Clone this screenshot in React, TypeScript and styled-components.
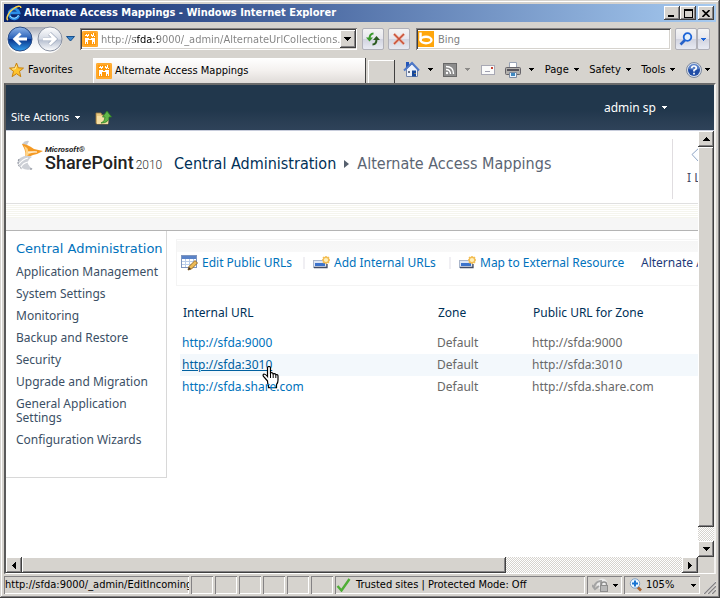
import React from "react";
import styled, { createGlobalStyle, css } from "styled-components";

const face = "#d6d3ce";
const ui = `"DejaVu Sans Condensed", "DejaVu Sans", sans-serif`;
const body = `"Noto Sans", "Open Sans", sans-serif`;

const Global = createGlobalStyle`
  * { box-sizing: border-box; }
  html, body, #root { height: 100%; }
  body { margin: 0; overflow: hidden; }
  button, input { font: inherit; color: inherit; margin: 0; padding: 0; border: 0; background: none; border-radius: 0; outline: 0; }
  svg { display: block; flex: none; }
  a { text-decoration: none; }
`;

const raised = css`
  background: ${face};
  box-shadow: inset -1px -1px #404040, inset 1px 1px #fff, inset -2px -2px #848284;
`;

const Window = styled.div`
  display: flex;
  flex-direction: column;
  height: 100vh;
  padding: 4px;
  overflow: hidden;
  background: ${face};
  color: #000;
  font: 11px/14px ${ui};
  box-shadow: inset -1px -1px #404040, inset 1px 1px ${face}, inset -2px -2px #848284, inset 2px 2px #fff;
`;

const TitleBar = styled.header`
  display: flex;
  align-items: center;
  flex: none;
  height: 18px;
  padding: 0 2px;
  gap: 2px;
  background: linear-gradient(to right, #0a246a, #a6caf0);
  color: #fff;
`;
const Title = styled.h1`
  flex: 1;
  margin: 0;
  font: bold 11px/18px ${ui};
  white-space: nowrap;
  overflow: hidden;
`;
const CaptionGroup = styled.div`display: flex;`;
const CaptionButton = styled.button`
  display: grid;
  place-items: center;
  width: 16px;
  height: 14px;
  ${raised}
`;

const NavRow = styled.div`
  display: flex;
  align-items: center;
  flex: none;
  height: 34px;
  padding: 0 6px 0 3px;
`;
const Capsule = styled.div`
  display: flex;
  align-items: center;
  justify-content: space-between;
  width: 55px;
  height: 25px;
  border-radius: 13px;
  background: linear-gradient(#a8abb5, #eceef2 45%, #fff);
  box-shadow: 0 1px #fff;
`;
const IconButton = styled.button<{ $w?: number }>`
  display: flex;
  align-items: center;
  justify-content: center;
  flex: none;
  width: ${(p) => p.$w ?? 24}px;
  height: 24px;
`;
const Field = styled.div<{ $grow: number; $left: number }>`
  display: flex;
  align-items: center;
  flex: ${(p) => p.$grow} 1 0;
  min-width: 0;
  height: 22px;
  margin-left: ${(p) => p.$left}px;
  padding: 2px 1px 2px 2px;
  background: #fff;
  box-shadow: inset 1px 1px #848284, inset -1px -1px #fff, inset 2px 2px #404040, inset -2px -2px ${face};
`;
const AddressInput = styled.input`
  flex: 1;
  min-width: 0;
  margin-left: 3px;
  height: 18px;
  color: transparent;
  background: linear-gradient(to right, #808080 34px, #000 34px, #000 57px, #808080 57px);
  background-clip: text;
  -webkit-background-clip: text;
`;
const SearchInput = styled.input`
  flex: 1;
  min-width: 0;
  margin-left: 4px;
  height: 18px;
  &::placeholder { color: #808080; opacity: 1; }
`;
const DropButton = styled.button`
  display: grid;
  place-items: center;
  width: 16px;
  height: 18px;
  ${raised}
`;
const SoftButton = styled.button<{ $left?: number; $w: number }>`
  display: grid;
  place-items: center;
  flex: none;
  width: ${(p) => p.$w}px;
  height: 22px;
  margin-left: ${(p) => p.$left ?? 0}px;
  border: 1px solid #b0b0b8;
  border-radius: 2px;
  background: linear-gradient(#f4f4f4, #e6e6ee 50%, #d2d4e0 52%, #e8eaf2);
`;

const CommandRow = styled.div`
  display: flex;
  align-items: center;
  flex: none;
  height: 27px;
  padding: 0 6px 0 5px;
`;
const Favorites = styled.button`
  display: flex;
  align-items: center;
  gap: 4px;
  width: 84px;
  height: 24px;
`;
const TabButton = styled.button`
  display: flex;
  align-items: center;
  align-self: flex-end;
  flex: 1 1 0;
  min-width: 0;
  gap: 3px;
  height: 25px;
  padding-left: 3px;
  border-right: 1px solid #404040;
  background: linear-gradient(#fff, #f4f1ef 50%, #dfdbd8);
  box-shadow: inset 1px 1px #fff;
  white-space: nowrap;
`;
const NewTab = styled.button`
  align-self: flex-end;
  width: 27px;
  height: 23px;
  margin: 0 8px 0 2px;
  border-right: 1px solid #404040;
  box-shadow: inset 1px 1px #fff;
`;
const Commands = styled.nav`
  display: flex;
  align-items: center;
  justify-content: space-between;
  width: 307px;
`;
const Command = styled.button<{ $gap?: number }>`
  display: flex;
  align-items: center;
  gap: ${(p) => p.$gap ?? 5}px;
  height: 22px;
`;

const Frame = styled.div`
  display: flex;
  flex-direction: column;
  flex: 1;
  min-height: 0;
  border: solid;
  border-width: 2px 2px 1px 2px;
  border-color: #6a6a6a #f4f2f0 #fff #5a5a5a;
  background: #fff;
`;
const Ribbon = styled.div`
  display: flex;
  flex: none;
  justify-content: space-between;
  height: 46px;
  padding: 0 47px 0 5px;
  border-bottom: 1px solid #c8cddc;
  background: linear-gradient(#21374c 55%, #2b3f55 85%, #2e4259);
  color: #fff;
`;
const RibbonGroup = styled.div<{ $low?: boolean }>`
  display: flex;
  align-items: center;
  gap: 15px;
  padding-top: ${(p) => (p.$low ? 20 : 0)}px;
`;
const RibbonButton = styled.button<{ $wide?: boolean }>`
  display: flex;
  align-items: center;
  gap: 6px;
  font: ${(p) => (p.$wide ? `12px/16px ${body}` : `11px/14px ${ui}`)};
`;
const PaneRow = styled.div`
  display: flex;
  flex: 1;
  min-height: 0;
`;
const Page = styled.div`
  flex: 1;
  min-width: 0;
  overflow: hidden;
  font: 12px/14px ${body};
`;
const PageHead = styled.div`
  display: flex;
  align-items: flex-start;
  height: 73px;
  padding: 8px 0 0 10px;
  border-bottom: 1px solid #e0e0e0;
`;
const Brand = styled.div`
  display: flex;
  width: 158px;
  height: 40px;
`;
const BrandText = styled.div`
  display: grid;
  align-content: start;
  padding: 7px 0 0 1px;
  font-family: Roboto, sans-serif;
  color: #222;
`;
const BrandSmall = styled.span`font: italic bold 8px/8px Roboto, sans-serif;`;
const BrandLine = styled.span`
  display: flex;
  align-items: baseline;
  gap: 2px;
  font-size: 18px;
  font-weight: 500;
  line-height: 18px;
`;
const BrandYear = styled.span`
  font-size: 12px;
  font-weight: 300;
  color: #333;
`;
const Crumbs = styled.h2`
  display: flex;
  align-items: center;
  flex: 1;
  gap: 8px;
  margin: 15px 0 0;
  font: 16px/20px ${ui};
  color: #5b6573;
  white-space: nowrap;
`;
const CrumbLink = styled.a`color: #003057;`;
const Social = styled.div`
  display: grid;
  justify-items: start;
  align-content: start;
  flex: none;
  width: 26px;
  height: 60px;
  overflow: hidden;
  padding: 7px 0 0 14px;
  border-left: 1px solid #e0dde0;
  color: #444a66;
  white-space: nowrap;
`;
const SocialIcon = styled.span`
  padding-left: 4px;
  height: 25px;
`;
const Strip = styled.div`
  height: 27px;
  border-bottom: 1px solid #b4b4b4;
  background: linear-gradient(transparent 14px, #f6f6f6 14px), repeating-linear-gradient(#fff 0 1px, #f5f5ee 1px 2px);
`;
const Columns = styled.div`
  display: flex;
  align-items: flex-start;
`;
const Sidebar = styled.nav`
  display: flex;
  flex-direction: column;
  align-items: flex-start;
  flex: none;
  gap: 8px;
  width: 161px;
  min-height: 247px;
  padding: 10px 0 0 10px;
  border: solid #d8d8d8;
  border-width: 0 1px 1px 0;
`;
const SideHeading = styled.a`
  font: 13px/16px "DejaVu Sans", sans-serif;
  color: #0072bc;
  white-space: nowrap;
`;
const SideLink = styled.a`
  max-width: 146px;
  line-height: 14px;
  color: #3b4f65;
`;
const Main = styled.main`
  flex: 1;
  min-width: 0;
  padding: 8px 0 0 9px;
`;
const Toolbar = styled.div`
  display: flex;
  align-items: center;
  height: 47px;
  padding-left: 4px;
  overflow: hidden;
  border: solid #f4f4f4;
  border-width: 1px 0 1px 1px;
  background: linear-gradient(#fff 1px, #f6f6f6 1px, #f8f8f8 12px, #fff 12px);
  color: #1e3a7a;
  white-space: nowrap;
`;
const Tool = styled.a<{ $w: number }>`
  display: flex;
  align-items: center;
  gap: 4px;
  flex: none;
  width: ${(p) => p.$w}px;
  color: #0072bc;
`;
const ToolSep = styled.span`
  flex: none;
  width: 2px;
  height: 12px;
  margin-right: 8px;
  background: #f0eff3;
`;
const Table = styled.table`
  width: 100%;
  margin-top: 16px;
  border-collapse: collapse;
  table-layout: fixed;
`;
const Th = styled.th<{ $w?: number }>`
  width: ${(p) => (p.$w ? `${p.$w}px` : "auto")};
  height: 22px;
  padding: 0 0 0 7px;
  text-align: left;
  font-weight: normal;
  color: #003057;
`;
const Spacer = styled.tr`height: 8px;`;
const Row = styled.tr<{ $hot?: boolean }>`
  height: 22px;
  color: #686868;
  background: ${(p) => (p.$hot ? "linear-gradient(to right, #fff 4px, #f3f8fc 4px)" : "none")};
`;
const Td = styled.td`padding: 0 0 0 6px;`;
const UrlLink = styled.a<{ $hot?: boolean }>`
  position: relative;
  color: ${(p) => (p.$hot ? "#0060a0" : "#0072bc")};
  text-decoration: ${(p) => (p.$hot ? "underline" : "none")};
`;
const Pointer = styled.span`
  position: absolute;
  right: -8px;
  top: 10px;
`;

const track = `repeating-conic-gradient(#fff 0 25%, ${face} 0 50%) 0 0 / 2px 2px`;
const VBar = styled.div`
  display: flex;
  flex-direction: column;
  flex: none;
  width: 16px;
  background: ${track};
`;
const HBar = styled.div`
  display: flex;
  flex: none;
  height: 16px;
  margin-right: 16px;
  background: ${track};
`;
const HBarRow = styled.div`background: ${face};`;
const ScrollButton = styled.button`
  display: grid;
  place-items: center;
  flex: none;
  width: 16px;
  height: 16px;
  ${raised}
`;
const VThumb = styled.div`
  flex: 0 1 380px;
  margin-bottom: auto;
  ${raised}
`;
const HThumb = styled.div`
  flex: 0 0 70%;
  margin-right: auto;
  ${raised}
`;

const StatusBar = styled.footer`
  display: flex;
  flex: none;
  gap: 2px;
  height: 20px;
  padding-top: 2px;
`;
const Cell = styled.div<{ $w?: number }>`
  display: flex;
  align-items: center;
  flex: ${(p) => (p.$w ? `0 0 ${p.$w}px` : "1 1 0")};
  min-width: 0;
  gap: 5px;
  padding-left: 1px;
  overflow: hidden;
  white-space: nowrap;
  box-shadow: inset 1px 1px #848284, inset -1px -1px #fff;
`;
const StatusButton = styled.button`
  display: flex;
  align-items: center;
  justify-content: space-between;
  flex: 1;
  height: 16px;
  padding: 0 4px;
`;
const ZoomLabel = styled.span`
  flex: 1;
  padding-left: 3px;
  text-align: left;
`;

type Dir = "up" | "down" | "left" | "right";
const arrows: Record<Dir, string> = {
  up: "M3 0h1v1h1v1h1v1h1v1H0V3h1V2h1V1h1z",
  down: "M0 0h7v1H6v1H5v1H4v1H3V3H2V2H1V1H0z",
  left: "M3 0h1v7H3V6H2V5H1V4H0V3h1V2h1V1h1z",
  right: "M0 0h1v1h1v1h1v1h1v1H3v1H2v1H1v1H0z",
};
const Arrow = ({ dir = "down", color = "#000" }: { dir?: Dir; color?: string }) => {
  const flat = dir === "up" || dir === "down";
  return (
    <svg width={flat ? 7 : 4} height={flat ? 4 : 7} shapeRendering="crispEdges" aria-hidden>
      <path d={arrows[dir]} fill={color} />
    </svg>
  );
};
const Caret = ({ color = "#000" }: { color?: string }) => (
  <svg width="5" height="3" shapeRendering="crispEdges" aria-hidden>
    <path d="M0 0h5v1H4v1H3v1H2V2H1V1H0z" fill={color} />
  </svg>
);

const IeIcon = () => (
  <svg width="16" height="16" viewBox="0 0 16 16" aria-hidden>
    <path d="M12.8 10.6A5 5 0 1 1 13 7.8H4" fill="none" stroke="#2b8fe8" strokeWidth="2.8" />
    <path d="M12.6 10.2A4.8 4.8 0 0 1 4 11" fill="none" stroke="#9fe0ff" strokeWidth="1" />
    <path d="M2 15C-.5 13.6 2.500 7 7.600 3.500 11 .8 15 .2 14.800 3" fill="none" stroke="#ffd54a" strokeWidth="1.500" />
  </svg>
);
const SiteIcon = () => (
  <svg width="16" height="16" viewBox="0 0 16 16" aria-hidden>
    <rect width="16" height="16" rx="1.500" fill="#ff9a0c" />
    <rect x="1" y="1" width="14" height="14" fill="none" stroke="#ffb84c" />
    <g fill="#fff" shapeRendering="crispEdges">
      <path d="M3 7h4v2H6v4H5v-2H4v2H3zM9 7h4v6h-1v-2h-1v2h-1V9H9z" />
      <path d="M4 3h1v1h1V3h1v2H6v1H5V5H4zM9 3h1v1h1V2h1v3h-1v1h-1V5H9zM7 8h2v1H7zM3 4h1v1H3zM12 5h1v1h-1z" />
    </g>
  </svg>
);
const BackIcon = () => (
  <svg width="26" height="26" viewBox="0 0 26 26" aria-hidden>
    <defs>
      <linearGradient id="back" x1="0" y1="0" x2="0" y2="1">
        <stop offset="0" stopColor="#8fb4e8" />
        <stop offset=".48" stopColor="#2860b8" />
        <stop offset=".52" stopColor="#08348c" />
        <stop offset="1" stopColor="#35a0ee" />
      </linearGradient>
    </defs>
    <circle cx="13" cy="13" r="12" fill="url(#back)" stroke="#294c86" />
    <path d="M20 13H8M13.500 7.500L7.800 13l5.700 5.500" fill="none" stroke="#fff" strokeWidth="3" />
  </svg>
);
const ForwardIcon = () => (
  <svg width="26" height="26" viewBox="0 0 26 26" aria-hidden>
    <defs>
      <linearGradient id="fwd" x1="0" y1="0" x2="0" y2="1">
        <stop offset="0" stopColor="#fff" />
        <stop offset=".5" stopColor="#d5dae4" />
        <stop offset=".55" stopColor="#b6bfd0" />
        <stop offset="1" stopColor="#fff" />
      </linearGradient>
    </defs>
    <circle cx="13" cy="13" r="12" fill="url(#fwd)" stroke="#8a92a2" />
    <path d="M6 13h12M12.500 7.500l5.700 5.500-5.700 5.500" fill="none" stroke="#98a4b8" strokeWidth="4" />
    <path d="M6 13h12M12.500 7.500l5.700 5.500-5.700 5.500" fill="none" stroke="#fff" strokeWidth="2.800" />
  </svg>
);
const RefreshIcon = () => (
  <svg width="16" height="16" viewBox="0 0 16 16" aria-hidden>
    <path d="M8.500 2.500Q4.500 2.500 4.500 8" fill="none" stroke="#3a9a2c" strokeWidth="2" />
    <path d="M1 6.500h7L4.500 10.500z" fill="#3a9a2c" />
    <path d="M7.500 13.500q4 0 4-5.500" fill="none" stroke="#2b5a20" strokeWidth="2" />
    <path d="M8 9h7l-3.500-4z" fill="#2b5a20" />
  </svg>
);
const StopIcon = () => (
  <svg width="14" height="14" viewBox="0 0 14 14" aria-hidden>
    <path d="M2 2l10 10M12 2L2 12" stroke="#f0a890" strokeWidth="2.600" />
    <path d="M2 2l10 10M12 2L2 12" stroke="#c4503a" strokeWidth="1.400" />
  </svg>
);
const BingIcon = () => (
  <svg width="16" height="16" viewBox="0 0 16 16" aria-hidden>
    <rect width="16" height="16" fill="#ffa60c" />
    <path d="M2.500 1.500v8" stroke="#fff" strokeWidth="2.500" />
    <ellipse cx="8" cy="9" rx="5.500" ry="3.300" fill="none" stroke="#fff" strokeWidth="2.400" />
  </svg>
);
const SearchIcon = () => (
  <svg width="14" height="14" viewBox="0 0 14 14" aria-hidden>
    <path d="M6 8l-4.500 4.500" stroke="#2862c8" strokeWidth="2.600" />
    <circle cx="8.500" cy="5" r="3.800" fill="#e4f0fc" stroke="#1c64d8" strokeWidth="1.800" />
  </svg>
);
const StarIcon = () => (
  <svg width="15" height="16" viewBox="0 0 15 16" aria-hidden>
    <path d="M7.500 1l1.800 4.800 5.200.3-4 3.300 1.300 5.300-4.300-3-4.400 3 1.400-5.300-4-3.300 5.200-.3z" fill="#ffc42e" stroke="#c88310" />
    <path d="M7.500 3.500L6.300 6.800l-3 .3" fill="none" stroke="#fff0a8" />
  </svg>
);
const HomeIcon = () => (
  <svg width="17" height="17" viewBox="0 0 17 17" aria-hidden>
    <path d="M3.500 8v7.500h11V8L9 3z" fill="#edf2fb" stroke="#7184ac" />
    <path d="M1 9.500L9 2l7 7.500" fill="none" stroke="#4e78c8" strokeWidth="2" />
    <path d="M3 1h3v3L3 6.500z" fill="#2456b8" />
    <path d="M9 9.500h4v6H9z" fill="#17489a" />
    <path d="M5 10h2v2H5z" fill="#6a7288" />
    <path d="M11.500 12h1v1h-1z" fill="#f2b23c" />
  </svg>
);
const FeedIcon = () => (
  <svg width="14" height="14" viewBox="0 0 14 14" aria-hidden>
    <rect x=".5" y=".5" width="13" height="13" fill="#8c8c8c" stroke="#686868" />
    <path d="M3 3.500q7.500 0 7.500 7.500M3 6.500q4.500 0 4.500 4.500" fill="none" stroke="#fff" strokeWidth="1.400" />
    <circle cx="4" cy="10" r="1.200" fill="#fff" />
  </svg>
);
const MailIcon = () => (
  <svg width="14" height="10" viewBox="0 0 14 10" aria-hidden>
    <rect x=".5" y=".5" width="13" height="9" fill="#fafafa" stroke="#a8a8b4" />
    <path d="M10 2h2v2h-2z" fill="#c84434" />
    <path d="M4 6.500h5" stroke="#a0a0b0" />
  </svg>
);
const PrintIcon = () => (
  <svg width="16" height="16" viewBox="0 0 16 16" aria-hidden>
    <path d="M4.500 6V.5h7V6" fill="#fff" stroke="#9aa4b6" />
    <rect x=".5" y="5.500" width="15" height="7" rx="1" fill="#b2b0ac" stroke="#66646a" />
    <path d="M2 8h12" stroke="#56545c" strokeWidth="2" />
    <path d="M4.500 10.500h7v5h-7z" fill="#eaf4ff" stroke="#7d8aa0" />
    <path d="M6 11h4v3H6z" fill="#3e88c0" />
  </svg>
);
const HelpIcon = () => (
  <svg width="16" height="16" viewBox="0 0 16 16" aria-hidden>
    <circle cx="8" cy="8" r="7.500" fill="#d9e0ee" stroke="#7d899e" />
    <circle cx="8" cy="8" r="6" fill="#214da6" />
    <path d="M2.500 7a5.500 5.500 0 0 1 11 0q-5 1.500-11 0" fill="#7da2dc" opacity=".6" />
    <path d="M5.700 6.300Q5.800 4 8 4t2.300 2Q10.300 7.200 8 8.300v1.200M8 10.700v1.800" fill="none" stroke="#fff" strokeWidth="1.700" />
  </svg>
);
const FolderUpIcon = () => (
  <svg width="17" height="17" viewBox="0 0 17 17" aria-hidden>
    <path d="M1 4h5l1 2h6v9H2q-1 0-1-1z" fill="#e8c983" stroke="#a07c3c" strokeWidth=".8" />
    <path d="M2 7h12l-1 8H2z" fill="#f6dfa4" />
    <path d="M6 14q4-1 4-6H7.500L12 2l4.500 6H14q0 6-8 6z" fill="#62b74a" stroke="#2f8022" strokeWidth=".8" />
  </svg>
);
const SharePointMark = () => (
  <svg width="28" height="34" viewBox="0 0 28 34" aria-hidden>
    <path d="M6 5Q9 1 13 2l-2 4 2 3-5-1z" fill="#c9ccd2" />
    <path d="M6 5q5 0 12 5l9 2q-5 3-10 4-6 2-9 6 4-7-2-17z" fill="#f59a23" />
    <path d="M8 7q5 2 4 6l9-1-8 3-4 4q2-6-1-12z" fill="#ffd487" />
    <path d="M4 19q7-4 12-1-5 3-4 7 2 4 5 5-7 2-11-1-7-5-2-10z" fill="#cdd0d6" />
    <path d="M3 25q4-5 9-6M5 28q2-4 7-5M12 13l9 0" stroke="#fff" strokeWidth="1.200" fill="none" />
    <path d="M3 20q-3 6 3 10M14 30h3" stroke="#858a96" strokeWidth="1" fill="none" strokeDasharray="2 1" />
  </svg>
);
const EditGridIcon = () => (
  <svg width="17" height="16" viewBox="0 0 17 16" aria-hidden>
    <rect x=".5" y=".5" width="15" height="12" fill="#fff" stroke="#7f96be" />
    <path d="M1 1h14v3H1z" fill="#5a83c8" />
    <path d="M1 6.500h14M1 9.500h14M4.500 4v8M8.500 4v8M12.500 4v8" stroke="#b9cdea" />
    <path d="M7 15l1-3.500 6-6 2.500 2.500-6 6z" fill="#edbb55" stroke="#8d6220" strokeWidth=".9" />
    <path d="M7 15l1-3 2 2z" fill="#41342c" />
  </svg>
);
const NewItemIcon = () => (
  <svg width="17" height="14" viewBox="0 0 17 14" aria-hidden>
    <rect x=".5" y="4.500" width="13" height="7" fill="#dde6f5" stroke="#a9b5ca" />
    <rect x="2" y="7" width="10" height="3" fill="#3c73cc" />
    <path d="M1 11.500h13V8" fill="none" stroke="#434d64" strokeWidth="1.300" />
    <circle cx="13" cy="4" r="2.800" fill="#fff0bc" stroke="#f3be55" strokeWidth="1.400" />
    <path d="M13 0v1.500M13 6.500V8M9 4h1.500M15.500 4H17M10 1l1 1M15 6l1 1M16 1l-1 1M11 6l-1 1" stroke="#f3be55" strokeWidth="1.400" />
  </svg>
);
const CheckIcon = () => (
  <svg width="15" height="14" viewBox="0 0 15 14" aria-hidden>
    <path d="M1.500 8l4 4.500L13.500 1" fill="none" stroke="#4fae36" strokeWidth="2.400" />
  </svg>
);
const LockIcon = () => (
  <svg width="18" height="15" viewBox="0 0 18 15" aria-hidden>
    <circle cx="10" cy="6" r="5.500" fill="#ececec" />
    <path d="M2 9Q4 3 9 3v8M0 7l3 4 4-3" fill="none" stroke="#a4a4a4" strokeWidth="2" />
    <path d="M9.500 8V6q0-2 2.500-2t2.500 2v2" fill="none" stroke="#8d8d8d" strokeWidth="1.400" />
    <rect x="8.500" y="7.500" width="7" height="6" fill="#b8b8b8" stroke="#8d8d8d" />
  </svg>
);
const ZoomIcon = () => (
  <svg width="14" height="14" viewBox="0 0 14 14" aria-hidden>
    <path d="M8 8.500l4 4" stroke="#ad642c" strokeWidth="2.600" />
    <circle cx="6" cy="5.500" r="4.700" fill="#edf7ff" stroke="#7b9ec6" />
    <path d="M6 2.500v6M3 5.500h6" stroke="#1873d2" strokeWidth="2" />
  </svg>
);
const Grip = () => (
  <svg width="14" height="18" viewBox="0 0 14 18" aria-hidden>
    <path d="M1 18L14 5M5 18l9-9M9 18l5-5" stroke="#fff" />
    <path d="M2 18L14 6M6 18l8-8M10 18l4-4" stroke="#848284" strokeWidth="1.400" />
  </svg>
);
const HandCursor = () => (
  <svg width="18" height="23" viewBox="0 0 18 23" aria-hidden>
    <path
      d="M5.500 15L1.500 10.500q-1-2 .5-2.500 1.500 0 3.500 2.500V2q0-1.500 1.500-1.500T8.500 2v5q2-1 2.500.8 2-.8 2.800.8 2.200-.4 2.200 1.600v4q0 2.500-1.500 4.500v3h-8v-2.500q-1-1-1-4.200z"
      fill="#fff"
      stroke="#000"
      strokeWidth="1.200"
    />
    <path d="M8.500 7v5M11.200 8v4M13.800 9v3" stroke="#000" />
  </svg>
);
const CrumbArrow = () => (
  <svg width="5" height="8" viewBox="0 0 5 8" aria-hidden>
    <path d="M0 0l5 4-5 4z" fill="#56606e" />
  </svg>
);
const TagIcon = () => (
  <svg width="16" height="18" viewBox="0 0 16 18" aria-hidden>
    <path d="M9 1L1 8.500 8 16h8V1z" fill="#fbfdff" stroke="#8ea4c4" />
  </svg>
);

const sideLinks = [
  "Application Management",
  "System Settings",
  "Monitoring",
  "Backup and Restore",
  "Security",
  "Upgrade and Migration",
  "General Application Settings",
  "Configuration Wizards",
];
const mappings = ["http://sfda:9000", "http://sfda:3010", "http://sfda.share.com"];
const hovered = 1;

export default function App() {
  return (
    <Window>
      <Global />
      <TitleBar>
        <IeIcon />
        <Title>Alternate Access Mappings - Windows Internet Explorer</Title>
        <CaptionGroup>
          <CaptionButton aria-label="Minimize">
            <svg width="8" height="8"><path d="M0 6h6v2H0z" /></svg>
          </CaptionButton>
          <CaptionButton aria-label="Maximize">
            <svg width="9" height="9" shapeRendering="crispEdges"><path d="M0 0h9v9H0zM1 2v6h7V2z" fillRule="evenodd" /></svg>
          </CaptionButton>
        </CaptionGroup>
        <CaptionButton aria-label="Close">
          <svg width="8" height="7"><path d="M.5 0l7 7M7.500 0l-7 7" stroke="#000" strokeWidth="1.600" /></svg>
        </CaptionButton>
      </TitleBar>

      <NavRow>
        <Capsule>
          <IconButton $w={25} aria-label="Back"><BackIcon /></IconButton>
          <IconButton $w={25} aria-label="Forward"><ForwardIcon /></IconButton>
        </Capsule>
        <IconButton $w={16} aria-label="Recent pages">
          <svg width="9" height="6"><path d="M.5.500h8L4.500 5z" fill="#3a86cc" stroke="#17508e" /></svg>
        </IconButton>
        <Field $grow={277} $left={2}>
          <SiteIcon />
          <AddressInput aria-label="Address" defaultValue="http://sfda:9000/_admin/AlternateUrlCollections." />
          <DropButton aria-label="Show address list"><Arrow /></DropButton>
        </Field>
        <SoftButton $w={22} $left={5} aria-label="Refresh"><RefreshIcon /></SoftButton>
        <SoftButton $w={22} $left={4} aria-label="Stop"><StopIcon /></SoftButton>
        <Field $grow={255} $left={6}>
          <BingIcon />
          <SearchInput aria-label="Search" placeholder="Bing" />
        </Field>
        <SoftButton $w={22} $left={4} aria-label="Go"><SearchIcon /></SoftButton>
        <SoftButton $w={13} aria-label="Search options"><Caret color="#1c64d8" /></SoftButton>
      </NavRow>

      <CommandRow>
        <Favorites><StarIcon />Favorites</Favorites>
        <TabButton><SiteIcon />Alternate Access Mappings</TabButton>
        <NewTab aria-label="New tab" />
        <Commands>
          <Command $gap={8} aria-label="Home"><HomeIcon /><Caret /></Command>
          <Command $gap={8} aria-label="Feeds"><FeedIcon /><Caret color="#8c8a88" /></Command>
          <Command aria-label="Read mail"><MailIcon /></Command>
          <Command $gap={8} aria-label="Print"><PrintIcon /><Caret /></Command>
          <Command>Page<Caret /></Command>
          <Command>Safety<Caret /></Command>
          <Command>Tools<Caret /></Command>
          <Command $gap={3} aria-label="Help"><HelpIcon /><Caret /></Command>
        </Commands>
      </CommandRow>

      <Frame>
        <Ribbon>
          <RibbonGroup $low>
            <RibbonButton>Site Actions<Caret color="#fff" /></RibbonButton>
            <RibbonButton aria-label="Navigate up"><FolderUpIcon /></RibbonButton>
          </RibbonGroup>
          <RibbonGroup>
            <RibbonButton $wide>admin sp<Caret color="#fff" /></RibbonButton>
          </RibbonGroup>
        </Ribbon>
        <PaneRow>
          <Page>
            <PageHead>
              <Brand>
                <SharePointMark />
                <BrandText>
                  <BrandSmall>Microsoft®</BrandSmall>
                  <BrandLine>SharePoint<BrandYear>2010</BrandYear></BrandLine>
                </BrandText>
              </Brand>
              <Crumbs>
                <CrumbLink href="#">Central Administration</CrumbLink>
                <CrumbArrow />
                Alternate Access Mappings
              </Crumbs>
              <Social>
                <SocialIcon><TagIcon /></SocialIcon>
                I Like It
              </Social>
            </PageHead>
            <Strip />
            <Columns>
              <Sidebar>
                <SideHeading href="#">Central Administration</SideHeading>
                {sideLinks.map((t) => (
                  <SideLink key={t} href="#">{t}</SideLink>
                ))}
              </Sidebar>
              <Main>
                <Toolbar>
                  <Tool href="#" $w={122}><EditGridIcon />Edit Public URLs</Tool>
                  <ToolSep />
                  <Tool href="#" $w={136}><NewItemIcon />Add Internal URLs</Tool>
                  <ToolSep />
                  <Tool href="#" $w={182}><NewItemIcon />Map to External Resource</Tool>
                  Alternate Access Mapping Collection:
                </Toolbar>
                <Table>
                  <thead>
                    <tr>
                      <Th $w={255}>Internal URL</Th>
                      <Th $w={95}>Zone</Th>
                      <Th>Public URL for Zone</Th>
                    </tr>
                  </thead>
                  <tbody>
                    <Spacer />
                    {mappings.map((url, i) => (
                      <Row key={url} $hot={i === hovered}>
                        <Td>
                          <UrlLink href="#" $hot={i === hovered}>
                            {url}
                            {i === hovered && <Pointer><HandCursor /></Pointer>}
                          </UrlLink>
                        </Td>
                        <Td>Default</Td>
                        <Td>{url}</Td>
                      </Row>
                    ))}
                  </tbody>
                </Table>
              </Main>
            </Columns>
          </Page>
          <VBar>
            <ScrollButton aria-label="Scroll up"><Arrow dir="up" /></ScrollButton>
            <VThumb />
            <ScrollButton aria-label="Scroll down"><Arrow /></ScrollButton>
          </VBar>
        </PaneRow>
        <HBarRow>
          <HBar>
            <ScrollButton aria-label="Scroll left"><Arrow dir="left" /></ScrollButton>
            <HThumb />
            <ScrollButton aria-label="Scroll right"><Arrow dir="right" /></ScrollButton>
          </HBar>
        </HBarRow>
      </Frame>

      <StatusBar>
        <Cell $w={185}>http://sfda:9000/_admin/EditIncoming</Cell>
        <Cell $w={22} />
        <Cell $w={22} />
        <Cell $w={22} />
        <Cell $w={22} />
        <Cell $w={22} />
        <Cell $w={22} />
        <Cell><CheckIcon />Trusted sites | Protected Mode: Off</Cell>
        <Cell $w={35}>
          <StatusButton aria-label="Privacy report"><LockIcon /><Caret /></StatusButton>
        </Cell>
        <Cell $w={76}>
          <StatusButton><ZoomIcon /><ZoomLabel>105%</ZoomLabel><Caret /></StatusButton>
        </Cell>
        <Grip />
      </StatusBar>
    </Window>
  );
}
